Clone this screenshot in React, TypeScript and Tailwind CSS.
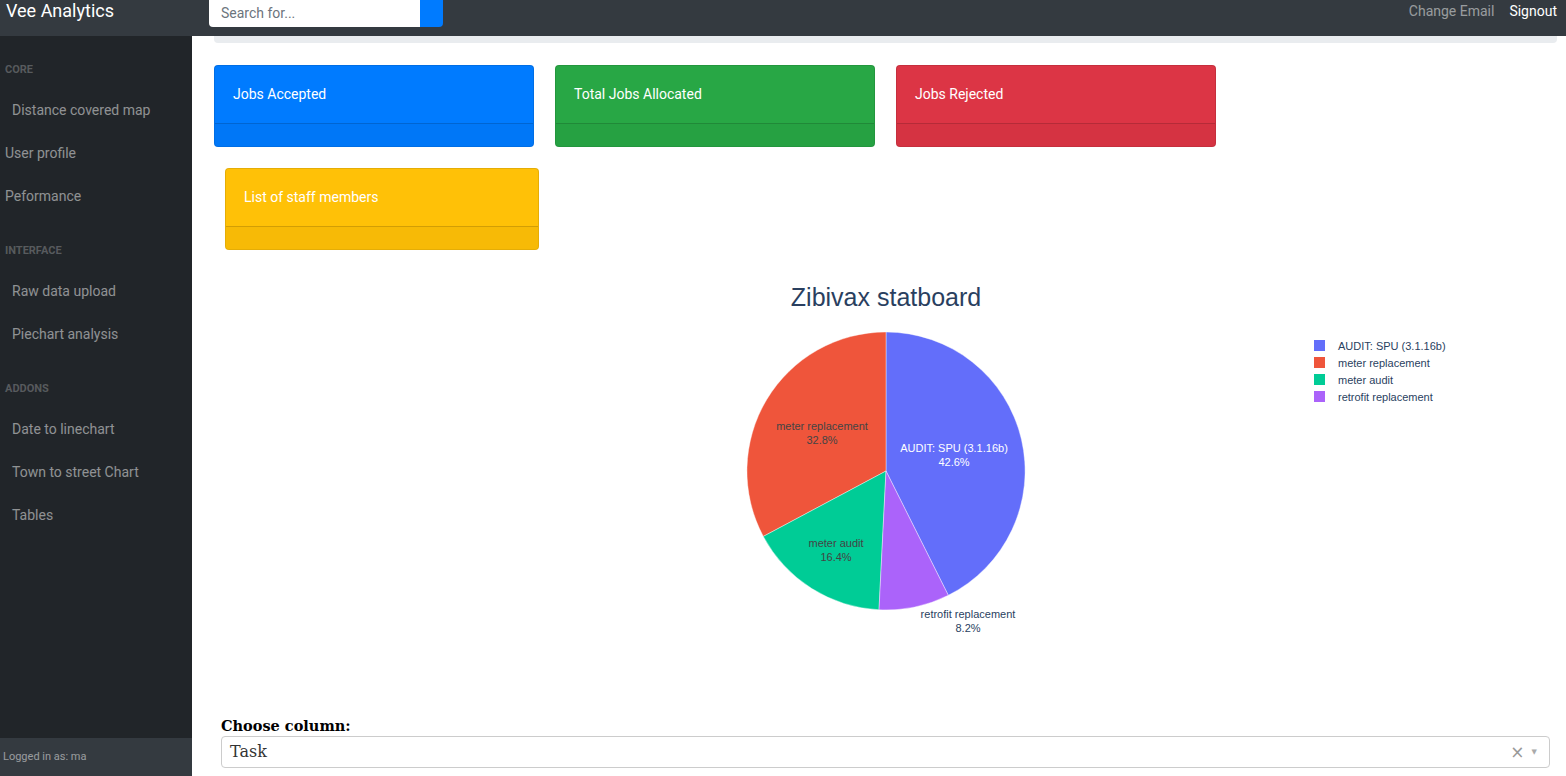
import React from 'react';

// Pie slices drawn in page coordinates (viewBox offset matches the main column)
const SLICES = [
  { label: 'AUDIT: SPU (3.1.16b)', color: '#636efa', d: 'M886 471 L886 332 A139 139 0 0 1 948.3 595.3 Z' },
  { label: 'meter replacement', color: '#ef553b', d: 'M886 471 L763.3 536.4 A139 139 0 0 1 886 332 Z' },
  { label: 'meter audit', color: '#00cc96', d: 'M886 471 L879 609.8 A139 139 0 0 1 763.3 536.4 Z' },
  { label: 'retrofit replacement', color: '#ab63fa', d: 'M886 471 L948.3 595.3 A139 139 0 0 1 879 609.8 Z' },
];

const PIE_LABELS = [
  { x: 954, y: 448, name: 'AUDIT: SPU (3.1.16b)', pct: '42.6%', fill: '#ffffff' },
  { x: 822, y: 426, name: 'meter replacement', pct: '32.8%', fill: '#444444' },
  { x: 836, y: 543, name: 'meter audit', pct: '16.4%', fill: '#444444' },
  { x: 968, y: 614, name: 'retrofit replacement', pct: '8.2%', fill: '#2a3f5f' },
];

const CARDS = [
  { title: 'Jobs Accepted', cls: 'bg-[#007bff]' },
  { title: 'Total Jobs Allocated', cls: 'bg-[#28a745]' },
  { title: 'Jobs Rejected', cls: 'bg-[#dc3545]' },
];

function SideHeading({ children }: { children: React.ReactNode }) {
  return (
    <div className="pt-[27px] pb-[13px] pl-[5px] text-[11px] leading-3 font-bold text-white/25">
      {children}
    </div>
  );
}

function SideLink({ children, indent = true }: { children: React.ReactNode; indent?: boolean }) {
  return (
    <div className={`h-[43px] flex items-center text-[14px] text-white/50 ${indent ? 'pl-[12px]' : 'pl-[5px]'}`}>
      {children}
    </div>
  );
}

function Card({ title, cls, width = 'w-[320px]' }: { title: string; cls: string; width?: string }) {
  return (
    <div className={`${width} h-[82px] rounded border border-black/10 ${cls} text-white flex flex-col overflow-hidden`}>
      <div className="h-[57px] flex items-center pl-[18px] text-[14px]">{title}</div>
      <div className="flex-1 bg-black/[0.03] border-t border-black/15" />
    </div>
  );
}

export default function App() {
  return (
    <div className="h-[776px] w-[1566px] overflow-hidden flex flex-col font-['Roboto',sans-serif] bg-white">
      {/* Navbar */}
      <div className="h-9 bg-[#343a40] flex items-start shrink-0">
        <div className="pl-[6px] w-[209px] text-[18px] leading-[22px] text-white">Vee Analytics</div>
        <div className="flex h-[27px]">
          <div className="w-[211px] bg-white rounded-bl flex items-center pl-[12px] text-[14px] text-[#6c757d]">
            Search for...
          </div>
          <div className="w-[23px] bg-[#007bff] rounded-br" />
        </div>
        <div className="ml-auto flex gap-[15px] pr-[9px] text-[14px] leading-[22px]">
          <span className="text-white/50">Change Email</span>
          <span className="text-white">Signout</span>
        </div>
      </div>

      <div className="flex flex-1 min-h-0">
        {/* Sidebar */}
        <div className="w-[192px] bg-[#212529] flex flex-col justify-between shrink-0">
          <div className="pt-[1px]">
            <SideHeading>CORE</SideHeading>
            <SideLink>Distance covered map</SideLink>
            <SideLink indent={false}>User profile</SideLink>
            <SideLink indent={false}>Peformance</SideLink>
            <SideHeading>INTERFACE</SideHeading>
            <SideLink>Raw data upload</SideLink>
            <SideLink>Piechart analysis</SideLink>
            <SideHeading>ADDONS</SideHeading>
            <SideLink>Date to linechart</SideLink>
            <SideLink>Town to street Chart</SideLink>
            <SideLink>Tables</SideLink>
          </div>
          <div className="h-[38px] bg-[#343a40] flex items-center pl-[3px] text-[11px] text-white/50">
            Logged in as: ma
          </div>
        </div>

        {/* Main */}
        <div className="flex-1 pl-[22px] pr-[9px] flex flex-col">
          <div className="h-[7px] bg-[#e9ecef] rounded-b" />

          <div className="mt-[22px] flex gap-[21px]">
            {CARDS.map((c) => (
              <Card key={c.title} title={c.title} cls={c.cls} />
            ))}
          </div>
          <div className="mt-[21px] ml-[11px]">
            <Card title="List of staff members" cls="bg-[#ffc107]" width="w-[314px]" />
          </div>

          {/* Pie chart */}
          <svg
            className="mt-[12px] shrink-0"
            width={1343}
            height={440}
            viewBox="214 262 1343 440"
            fontFamily="'Liberation Sans', Arial, sans-serif"
          >
            <text x={886} y={297} textAnchor="middle" dominantBaseline="central" fontSize={25} fill="#2a3f5f">
              Zibivax statboard
            </text>
            {SLICES.map((s) => (
              <path key={s.label} d={s.d} fill={s.color} stroke="#ffffff" strokeWidth={0.4} />
            ))}
            {PIE_LABELS.map((l) => (
              <g key={l.name} fontSize={11} fill={l.fill} textAnchor="middle">
                <text x={l.x} y={l.y} dominantBaseline="central">{l.name}</text>
                <text x={l.x} y={l.y + 14} dominantBaseline="central">{l.pct}</text>
              </g>
            ))}
            {SLICES.map((s, i) => (
              <g key={'lg' + s.label}>
                <rect x={1314} y={340 + i * 17} width={11} height={11} fill={s.color} />
                <text x={1338} y={346 + i * 17} dominantBaseline="central" fontSize={11} fill="#2a3f5f">
                  {s.label}
                </text>
              </g>
            ))}
          </svg>

          {/* Dropdown */}
          <div className="px-[7px] mt-[15px] font-['DejaVu_Serif',serif]">
            <div className="text-[14.5px] leading-[18px] font-bold text-black">Choose column:</div>
            <div className="mt-[1px] h-[32px] border border-[#ccc] rounded flex items-center pl-[8px] pr-[12px] text-[16px] text-[#333]">
              <span>Task</span>
              <span className="ml-auto text-[#999] font-['DejaVu_Sans',sans-serif] text-[17px] leading-none">×</span>
              <span className="ml-[7px] text-[#aaa] text-[7px] leading-none">▼</span>
            </div>
          </div>
        </div>
      </div>
    </div>
  );
}
